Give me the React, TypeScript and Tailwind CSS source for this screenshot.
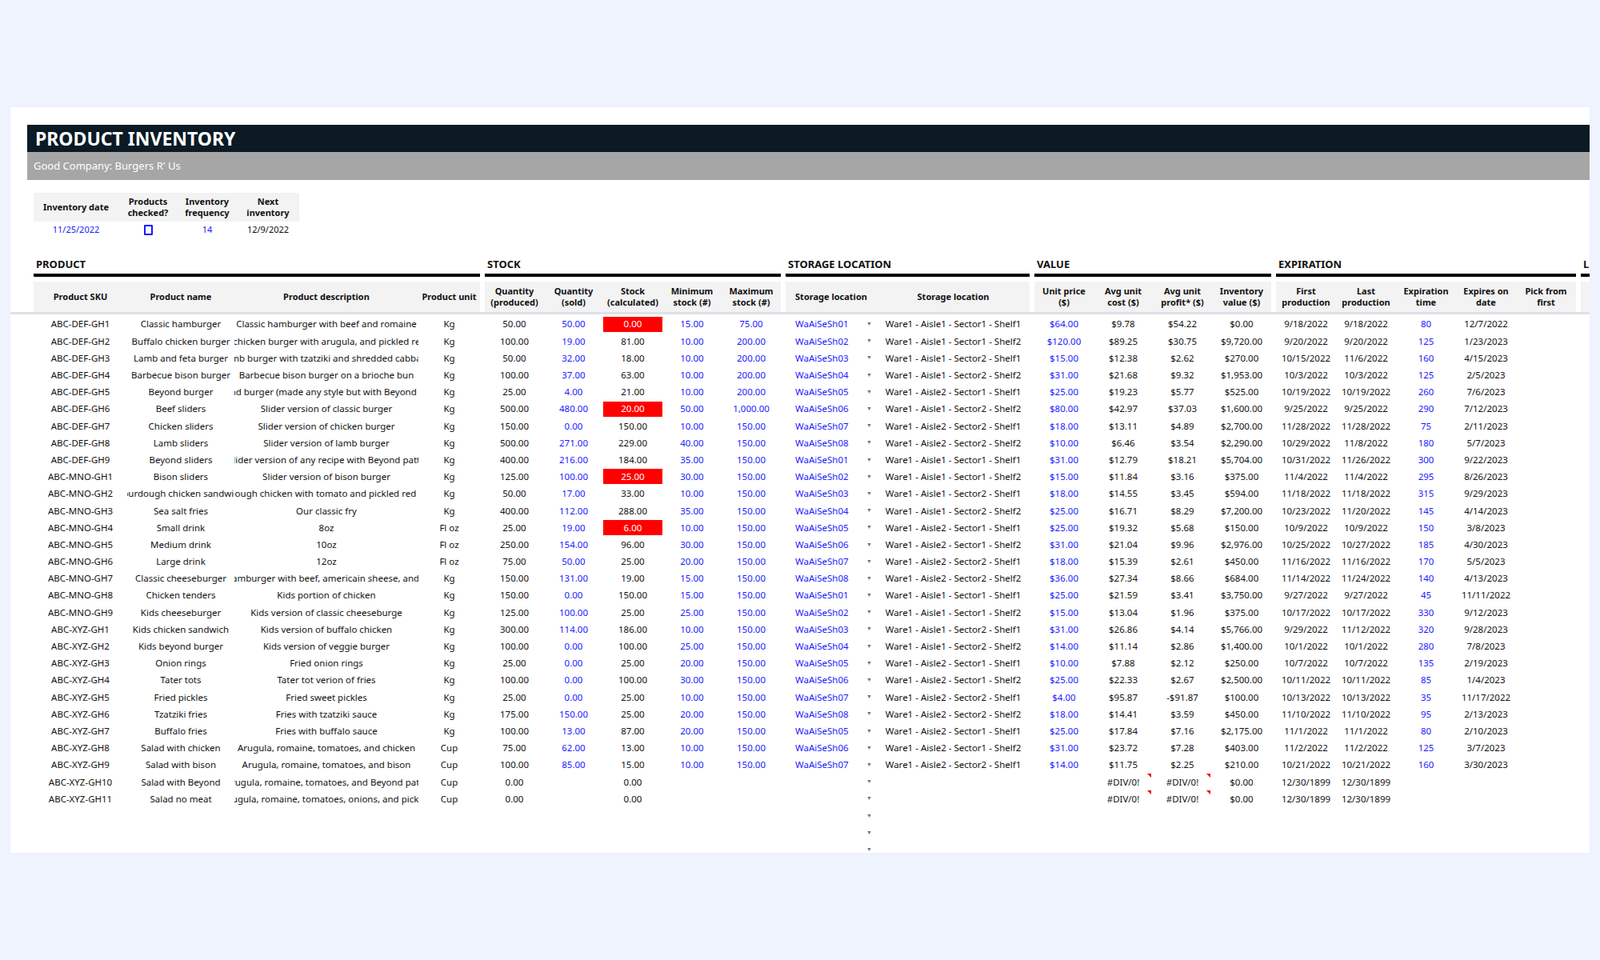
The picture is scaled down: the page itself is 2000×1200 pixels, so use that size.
import * as React from "react";

type Col = { w: number; gap?: boolean; blue?: boolean };

// column widths in px, gap marks the start of a new section
const cols: Col[] = [
  { w: 117 }, { w: 134 }, { w: 230 }, { w: 77 },
  { w: 74, gap: true }, { w: 74, blue: true }, { w: 74 }, { w: 74, blue: true }, { w: 74, blue: true },
  { w: 114, gap: true, blue: true }, { w: 191 },
  { w: 74, gap: true, blue: true }, { w: 74 }, { w: 74 }, { w: 74 },
  { w: 75, gap: true }, { w: 75 }, { w: 75, blue: true }, { w: 75 }, { w: 75 },
  { w: 40, gap: true },
];

const sections = [
  { label: "PRODUCT", span: [0, 3] },
  { label: "STOCK", span: [4, 8] },
  { label: "STORAGE LOCATION", span: [9, 10] },
  { label: "VALUE", span: [11, 14] },
  { label: "EXPIRATION", span: [15, 19] },
  { label: "L", span: [20, 20] },
];

const headers = [
  "Product SKU", "Product name", "Product description", "Product unit",
  "Quantity (produced)", "Quantity (sold)", "Stock (calculated)", "Minimum stock (#)", "Maximum stock (#)",
  "Storage location", "Storage location",
  "Unit price ($)", "Avg unit cost ($)", "Avg unit profit* ($)", "Inventory value ($)",
  "First production", "Last production", "Expiration time", "Expires on date", "Pick from first", "",
];

const raw = `ABC-DEF-GH1|Classic hamburger|Classic hamburger with beef and romaine|Kg|50.00|50.00|0.00|15.00|75.00|01|Aisle1 - Sector1 - Shelf1|$64.00|$9.78|$54.22|$0.00|9/18/2022|9/18/2022|80|12/7/2022
ABC-DEF-GH2|Buffalo chicken burger|Buffalo chicken burger with arugula, and pickled red onion|Kg|100.00|19.00|81.00|10.00|200.00|02|Aisle1 - Sector1 - Shelf2|$120.00|$89.25|$30.75|$9,720.00|9/20/2022|9/20/2022|125|1/23/2023
ABC-DEF-GH3|Lamb and feta burger|Lamb burger with tzatziki and shredded cabbage|Kg|50.00|32.00|18.00|10.00|200.00|03|Aisle1 - Sector2 - Shelf1|$15.00|$12.38|$2.62|$270.00|10/15/2022|11/6/2022|160|4/15/2023
ABC-DEF-GH4|Barbecue bison burger|Barbecue bison burger on a brioche bun|Kg|100.00|37.00|63.00|10.00|200.00|04|Aisle1 - Sector2 - Shelf2|$31.00|$21.68|$9.32|$1,953.00|10/3/2022|10/3/2022|125|2/5/2023
ABC-DEF-GH5|Beyond burger|Beyond burger (made any style but with Beyond patty)|Kg|25.00|4.00|21.00|10.00|200.00|05|Aisle2 - Sector1 - Shelf1|$25.00|$19.23|$5.77|$525.00|10/19/2022|10/19/2022|260|7/6/2023
ABC-DEF-GH6|Beef sliders|Slider version of classic burger|Kg|500.00|480.00|20.00|50.00|1,000.00|06|Aisle1 - Sector2 - Shelf2|$80.00|$42.97|$37.03|$1,600.00|9/25/2022|9/25/2022|290|7/12/2023
ABC-DEF-GH7|Chicken sliders|Slider version of chicken burger|Kg|150.00|0.00|150.00|10.00|150.00|07|Aisle2 - Sector2 - Shelf1|$18.00|$13.11|$4.89|$2,700.00|11/28/2022|11/28/2022|75|2/11/2023
ABC-DEF-GH8|Lamb sliders|Slider version of lamb burger|Kg|500.00|271.00|229.00|40.00|150.00|08|Aisle2 - Sector2 - Shelf2|$10.00|$6.46|$3.54|$2,290.00|10/29/2022|11/8/2022|180|5/7/2023
ABC-DEF-GH9|Beyond sliders|Slider version of any recipe with Beyond patty|Kg|400.00|216.00|184.00|35.00|150.00|01|Aisle1 - Sector1 - Shelf1|$31.00|$12.79|$18.21|$5,704.00|10/31/2022|11/26/2022|300|9/22/2023
ABC-MNO-GH1|Bison sliders|Slider version of bison burger|Kg|125.00|100.00|25.00|30.00|150.00|02|Aisle1 - Sector1 - Shelf2|$15.00|$11.84|$3.16|$375.00|11/4/2022|11/4/2022|295|8/26/2023
ABC-MNO-GH2|Sourdough chicken sandwich|Sourdough chicken with tomato and pickled red onion|Kg|50.00|17.00|33.00|10.00|150.00|03|Aisle1 - Sector2 - Shelf1|$18.00|$14.55|$3.45|$594.00|11/18/2022|11/18/2022|315|9/29/2023
ABC-MNO-GH3|Sea salt fries|Our classic fry|Kg|400.00|112.00|288.00|35.00|150.00|04|Aisle1 - Sector2 - Shelf2|$25.00|$16.71|$8.29|$7,200.00|10/23/2022|11/20/2022|145|4/14/2023
ABC-MNO-GH4|Small drink|8oz|Fl oz|25.00|19.00|6.00|10.00|150.00|05|Aisle2 - Sector1 - Shelf1|$25.00|$19.32|$5.68|$150.00|10/9/2022|10/9/2022|150|3/8/2023
ABC-MNO-GH5|Medium drink|10oz|Fl oz|250.00|154.00|96.00|30.00|150.00|06|Aisle2 - Sector1 - Shelf2|$31.00|$21.04|$9.96|$2,976.00|10/25/2022|10/27/2022|185|4/30/2023
ABC-MNO-GH6|Large drink|12oz|Fl oz|75.00|50.00|25.00|20.00|150.00|07|Aisle2 - Sector2 - Shelf1|$18.00|$15.39|$2.61|$450.00|11/16/2022|11/16/2022|170|5/5/2023
ABC-MNO-GH7|Classic cheeseburger|Classic hamburger with beef, americain sheese, and romaine|Kg|150.00|131.00|19.00|15.00|150.00|08|Aisle2 - Sector2 - Shelf2|$36.00|$27.34|$8.66|$684.00|11/14/2022|11/24/2022|140|4/13/2023
ABC-MNO-GH8|Chicken tenders|Kids portion of chicken|Kg|150.00|0.00|150.00|15.00|150.00|01|Aisle1 - Sector1 - Shelf1|$25.00|$21.59|$3.41|$3,750.00|9/27/2022|9/27/2022|45|11/11/2022
ABC-MNO-GH9|Kids cheeseburger|Kids version of classic cheeseburge|Kg|125.00|100.00|25.00|25.00|150.00|02|Aisle1 - Sector1 - Shelf2|$15.00|$13.04|$1.96|$375.00|10/17/2022|10/17/2022|330|9/12/2023
ABC-XYZ-GH1|Kids chicken sandwich|Kids version of buffalo chicken|Kg|300.00|114.00|186.00|10.00|150.00|03|Aisle1 - Sector2 - Shelf1|$31.00|$26.86|$4.14|$5,766.00|9/29/2022|11/12/2022|320|9/28/2023
ABC-XYZ-GH2|Kids beyond burger|Kids version of veggie burger|Kg|100.00|0.00|100.00|25.00|150.00|04|Aisle1 - Sector2 - Shelf2|$14.00|$11.14|$2.86|$1,400.00|10/1/2022|10/1/2022|280|7/8/2023
ABC-XYZ-GH3|Onion rings|Fried onion rings|Kg|25.00|0.00|25.00|20.00|150.00|05|Aisle2 - Sector1 - Shelf1|$10.00|$7.88|$2.12|$250.00|10/7/2022|10/7/2022|135|2/19/2023
ABC-XYZ-GH4|Tater tots|Tater tot verion of fries|Kg|100.00|0.00|100.00|30.00|150.00|06|Aisle2 - Sector1 - Shelf2|$25.00|$22.33|$2.67|$2,500.00|10/11/2022|10/11/2022|85|1/4/2023
ABC-XYZ-GH5|Fried pickles|Fried sweet pickles|Kg|25.00|0.00|25.00|10.00|150.00|07|Aisle2 - Sector2 - Shelf1|$4.00|$95.87|-$91.87|$100.00|10/13/2022|10/13/2022|35|11/17/2022
ABC-XYZ-GH6|Tzatziki fries|Fries with tzatziki sauce|Kg|175.00|150.00|25.00|20.00|150.00|08|Aisle2 - Sector2 - Shelf2|$18.00|$14.41|$3.59|$450.00|11/10/2022|11/10/2022|95|2/13/2023
ABC-XYZ-GH7|Buffalo fries|Fries with buffalo sauce|Kg|100.00|13.00|87.00|20.00|150.00|05|Aisle2 - Sector1 - Shelf1|$25.00|$17.84|$7.16|$2,175.00|11/1/2022|11/1/2022|80|2/10/2023
ABC-XYZ-GH8|Salad with chicken|Arugula, romaine, tomatoes, and chicken|Cup|75.00|62.00|13.00|10.00|150.00|06|Aisle2 - Sector1 - Shelf2|$31.00|$23.72|$7.28|$403.00|11/2/2022|11/2/2022|125|3/7/2023
ABC-XYZ-GH9|Salad with bison|Arugula, romaine, tomatoes, and bison|Cup|100.00|85.00|15.00|10.00|150.00|07|Aisle2 - Sector2 - Shelf1|$14.00|$11.75|$2.25|$210.00|10/21/2022|10/21/2022|160|3/30/2023
ABC-XYZ-GH10|Salad with Beyond|Arugula, romaine, tomatoes, and Beyond patty|Cup|0.00||0.00||||||#DIV/0!|#DIV/0!|$0.00|12/30/1899|12/30/1899||
ABC-XYZ-GH11|Salad no meat|Arugula, romaine, tomatoes, onions, and pickles|Cup|0.00||0.00||||||#DIV/0!|#DIV/0!|$0.00|12/30/1899|12/30/1899||`;

const rows: string[][] = raw.split("\n").map((l) => {
  const p = l.split("|");
  const code = p[9] ? "WaAiSeSh" + p[9] : "";
  const loc = p[10] ? "Ware1 - " + p[10] : "";
  return [...p.slice(0, 9), code, loc, ...p.slice(11), "", ""];
});
const blankRows: string[][] = [0, 1, 2].map(() => cols.map(() => ""));

const redRows = new Set([0, 5, 9, 12]);

function Caret() {
  return <span className="absolute right-[6px] top-1/2 -translate-y-1/2 text-[7px] text-gray-500">▼</span>;
}

function Cell({ c, children, className = "" }: { c: Col; children?: React.ReactNode; className?: string }) {
  return (
    <div
      className={`relative flex shrink-0 items-center justify-center overflow-hidden ${c.gap ? "ml-[6px]" : ""} ${className}`}
      style={{ width: c.w }}
    >
      {children}
    </div>
  );
}

export default function App() {
  return (
    <div className="min-h-[1200px] w-[2000px] overflow-hidden bg-[#eef3fd] pt-[134px] [font-family:'Liberation_Sans',Arial,sans-serif] text-[11.5px] text-[#111]">
      <div className="ml-[13px] h-[932px] w-[1974px] overflow-hidden bg-white pt-[22px] pl-[21px]">
        <div className="flex h-[34px] items-center bg-[#0b1a24] pl-[10px] text-[23px] font-bold text-white">PRODUCT INVENTORY</div>
        <div className="flex h-[35px] items-center bg-[#a6a6a6] pl-[8px] text-[13px] text-white">Good Company: Burgers R' Us</div>

        <div className="ml-[8px] mt-[16px] w-[332px]">
          <div className="flex h-[36px] items-center bg-[#f3f3f3] text-[11px] font-bold leading-[14px]">
            <div className="w-[106px] text-center">Inventory date</div>
            <div className="w-[74px] text-center">Products<br />checked?</div>
            <div className="w-[74px] text-center">Inventory<br />frequency</div>
            <div className="w-[78px] text-center">Next<br />inventory</div>
          </div>
          <div className="flex h-[20px] items-center text-[11px]">
            <div className="w-[106px] text-center text-[#1a1aff]">11/25/2022</div>
            <div className="flex w-[74px] justify-center"><span className="h-[13px] w-[11px] rounded-[1px] border-2 border-[#1a1aff]" /></div>
            <div className="w-[74px] text-center text-[#1a1aff]">14</div>
            <div className="w-[78px] text-center">12/9/2022</div>
          </div>
        </div>

        {/* section titles */}
        <div className="ml-[8px] mt-[24px] flex">
          {sections.map((s) => {
            const w = cols.slice(s.span[0], s.span[1] + 1).reduce((a, c) => a + c.w, 0);
            return (
              <div key={s.label} className={`shrink-0 border-b-[4px] border-black pb-[1px] pl-[3px] text-[13px] font-bold ${s.span[0] ? "ml-[6px]" : ""}`} style={{ width: w }}>
                {s.label}
              </div>
            );
          })}
        </div>

        {/* column headers */}
        <div className="ml-[8px] mt-[6px] flex h-[38px]">
          {cols.map((c, i) => (
            <Cell key={i} c={c} className="bg-[#f3f3f3] px-[2px] text-center text-[11px] font-bold leading-[14px]">
              {headers[i]}
            </Cell>
          ))}
        </div>
        <div className="-ml-[21px] h-[3px] bg-[#dde1e8]" />

        <div className="ml-[8px] mt-[2px]">
          {[...rows, ...blankRows].map((r, ri) => (
            <div key={ri} className="flex h-[21.2px]">
              {cols.map((c, i) => {
                const v = r[i] ?? "";
                const red = i === 6 && redRows.has(ri);
                const div = v === "#DIV/0!";
                return (
                  <Cell key={i} c={c} className={`whitespace-nowrap ${c.blue && ri < 27 ? "text-[#1a1aff]" : ""} ${i === 9 ? "justify-start pl-[12px]" : ""}`}>
                    {red ? (
                      <div className="flex h-[19px] w-[74px] items-center justify-center bg-[#ff0000] text-white">{v}</div>
                    ) : (
                      v
                    )}
                    {i === 9 && <Caret />}
                    {div && <span className="absolute right-[2px] top-0 h-0 w-0 border-l-[5px] border-t-[5px] border-l-transparent border-t-[#e00]" />}
                  </Cell>
                );
              })}
            </div>
          ))}
        </div>
      </div>
    </div>
  );
}
